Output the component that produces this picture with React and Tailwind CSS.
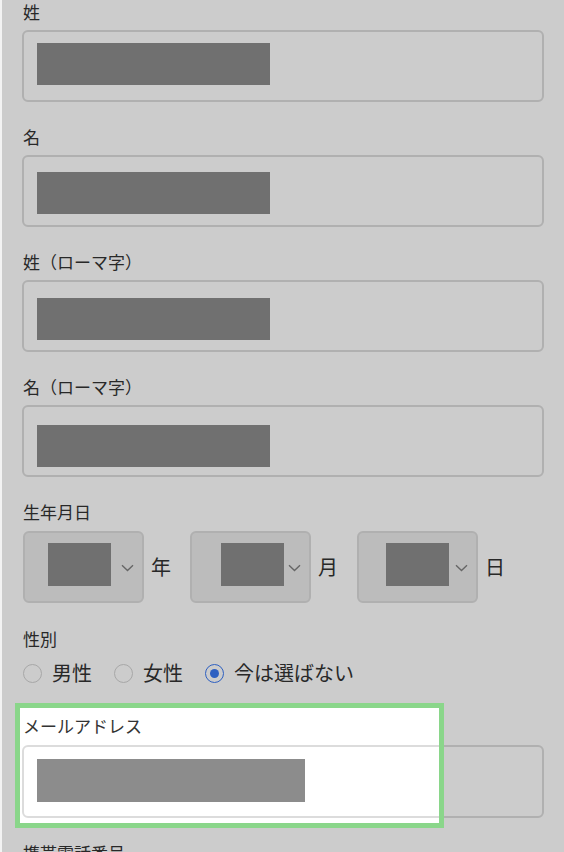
import React from "react";

const FONT = { fontFamily: '"Noto Sans CJK JP", "Noto Sans", sans-serif' };

function Label({ children }) {
  return (
    <div className="h-[24px] leading-[24px] text-[17px] text-[#333333] pl-[1px]">
      {children}
    </div>
  );
}

function TextField({ label, rectTop, rectWidth = 233 }) {
  return (
    <div className="flex flex-col">
      <Label>{label}</Label>
      <div className="mt-[6px] h-[72px] w-[522px] rounded-[6px] border-2 border-[#dcdcdc] bg-white pl-[13px]">
        <div
          className="h-[42px] bg-[#8c8c8c]"
          style={{ marginTop: rectTop, width: rectWidth }}
        />
      </div>
    </div>
  );
}

function Chevron() {
  return (
    <svg width="13" height="8" viewBox="0 0 13 8" className="shrink-0">
      <path d="M1 1.2 L6.5 6.6 L12 1.2" fill="none" stroke="#808080" strokeWidth="1.4" />
    </svg>
  );
}

function DateSelect({ inset, suffix, last }) {
  return (
    <div className={"flex items-center " + (last ? "" : "mr-[19px]")}>
      <div className="relative h-[72px] w-[121px] rounded-[6px] border-2 border-[#dcdcdc] bg-[#ececec]">
        <div
          className="absolute top-[10px] h-[43px] w-[63px] bg-[#8c8c8c]"
          style={{ left: inset }}
        />
        <div className="absolute left-[96px] top-[31px]">
          <Chevron />
        </div>
      </div>
      <span className="ml-[7px] text-[20px] leading-[28px] text-[#333333]">{suffix}</span>
    </div>
  );
}

function Radio({ checked, label }) {
  return (
    <div className="flex items-center gap-[10px]">
      {checked ? (
        <span className="flex h-[19px] w-[19px] items-center justify-center rounded-full border-[1.5px] border-[#3a78f2] bg-white">
          <span className="h-[9px] w-[9px] rounded-full bg-[#3a78f2]" />
        </span>
      ) : (
        <span className="h-[19px] w-[19px] rounded-full border-[1.5px] border-[#d2d2d2] bg-white" />
      )}
      <span className="text-[20px] leading-[30px] text-[#333333]">{label}</span>
    </div>
  );
}

export default function App() {
  return (
    <div
      className="relative h-[852px] w-[564px] overflow-hidden border-l-2 border-[#f3f3f3] bg-white"
      style={FONT}
    >
      <div className="flex flex-col pl-[20px] pr-[20px]">
        <TextField label="姓" rectTop={11} />
        <div className="mt-[23px]">
          <TextField label="名" rectTop={15} />
        </div>
        <div className="mt-[23px]">
          <TextField label="姓（ローマ字）" rectTop={16} />
        </div>
        <div className="mt-[23px]">
          <TextField label="名（ローマ字）" rectTop={18} />
        </div>

        <div className="mt-[23px] flex flex-col">
          <Label>生年月日</Label>
          <div className="mt-[7px] flex items-center pl-[1px]">
            <DateSelect inset={23} suffix="年" />
            <DateSelect inset={29} suffix="月" />
            <DateSelect inset={27} suffix="日" last />
          </div>
        </div>

        <div className="mt-[24px] flex flex-col">
          <Label>性別</Label>
          <div className="mt-[7px] flex items-center gap-[22px] pl-[1px]">
            <Radio label="男性" />
            <Radio label="女性" />
            <Radio label="今は選ばない" checked />
          </div>
        </div>

        <div className="relative mt-[26px] flex flex-col">
          <div className="absolute left-[-7px] top-[-11px] z-10 h-[125px] w-[429px] border-[5px] border-[#8ad68a] shadow-[0_0_0_2000px_rgba(0,0,0,0.2)]" />
          <Label>メールアドレス</Label>
          <div className="mt-[7px] h-[73px] w-[522px] rounded-[6px] border-2 border-[#dcdcdc] bg-white pl-[13px]">
            <div className="mt-[12px] h-[43px] w-[268px] bg-[#8c8c8c]" />
          </div>
        </div>

        <div className="mt-[23px]">
          <Label>携帯電話番号</Label>
        </div>
      </div>
    </div>
  );
}
